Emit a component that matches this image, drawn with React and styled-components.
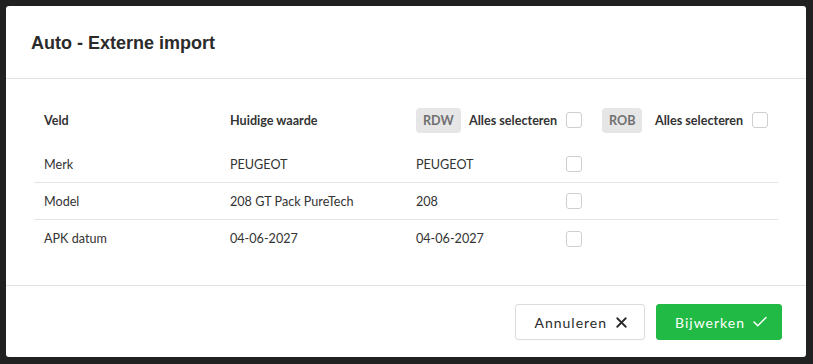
import { createGlobalStyle } from "styled-components";
import styled from "styled-components";
import { Check, X } from "lucide-react";

const GlobalStyle = createGlobalStyle`
  html, body {
    margin: 0;
    padding: 0;
    background: #212121;
    height: 100%;
  }
  * { box-sizing: border-box; }
`;

const Backdrop = styled.div`
  width: 813px;
  height: 364px;
  padding: 6px 7px 7px 6px;
  background: #212121;
`;

const Modal = styled.div`
  width: 800px;
  height: 351px;
  background: #fff;
  border-radius: 3px;
  display: flex;
  flex-direction: column;
  font-family: Lato, "Noto Sans", sans-serif;
  color: #333;
`;

const Header = styled.div`
  height: 73px;
  flex-shrink: 0;
  display: flex;
  align-items: center;
  padding: 2px 25px 0;
  border-bottom: 1px solid #e2e2e2;
`;

const Title = styled.h2`
  margin: 0;
  font-family: "Liberation Sans", Arial, sans-serif;
  font-size: 18px;
  font-weight: 700;
  color: #2b2b2b;
`;

const Body = styled.div`
  padding: 28px 28px 28px 28px;
  flex: 1;
`;

const Table = styled.div`
  display: grid;
  grid-template-columns: repeat(4, 186px);
  width: 744px;
`;

const Row = styled.div`
  display: contents;
`;

const Cell = styled.div`
  height: ${(p) => (p.$head ? "39px" : "37px")};
  padding: ${(p) => (p.$head ? "0 10px 13px" : "0 10px")};
  display: flex;
  align-items: center;
  justify-content: space-between;
  font-size: 12.6px;
  font-weight: ${(p) => (p.$head ? 700 : 400)};
  color: #333;
  border-bottom: ${(p) => (p.$line ? "1px solid #e4e4e4" : "none")};
`;

const Group = styled.div`
  display: flex;
  align-items: center;
`;

const BadgeSlot = styled.div`
  width: 53px;
`;

const Badge = styled.span`
  display: inline-flex;
  align-items: center;
  height: 25px;
  padding: 0 7px;
  background: #e6e6e6;
  border-radius: 4px;
  color: #707070;
  font-size: 12.6px;
  font-weight: 700;
`;

const Box = styled.span`
  width: 16px;
  height: 16px;
  border: 1px solid #cfcfcf;
  border-radius: 3px;
  background: #fff;
  flex-shrink: 0;
`;

const Footer = styled.div`
  height: 72px;
  border-top: 1px solid #e2e2e2;
  display: flex;
  justify-content: flex-end;
  align-items: flex-start;
  gap: 11px;
  padding: 18px 24px 0;
`;

const Button = styled.button`
  height: 36px;
  display: inline-flex;
  align-items: center;
  gap: 6px;
  padding: 0 ${(p) => (p.$primary ? "12px" : "14px")} 0 18px;
  border-radius: 3px;
  border: 1px solid ${(p) => (p.$primary ? "#21ba45" : "#dcdcdc")};
  background: ${(p) => (p.$primary ? "#21ba45" : "#fff")};
  color: ${(p) => (p.$primary ? "#fff" : "#2b2b2b")};
  font-family: Lato, "Noto Sans", sans-serif;
  font-size: 14px;
  letter-spacing: 1px;
  cursor: pointer;
`;

const rows = [
  { veld: "Merk", huidig: "PEUGEOT", rdw: "PEUGEOT" },
  { veld: "Model", huidig: "208 GT Pack PureTech", rdw: "208" },
  { veld: "APK datum", huidig: "04-06-2027", rdw: "04-06-2027" },
];

export default function App() {
  return (
    <>
      <GlobalStyle />
      <Backdrop>
        <Modal>
          <Header>
            <Title>Auto - Externe import</Title>
          </Header>
          <Body>
            <Table>
              <Row>
                <Cell $head>Veld</Cell>
                <Cell $head>Huidige waarde</Cell>
                <Cell $head>
                  <Group>
                    <BadgeSlot>
                      <Badge>RDW</Badge>
                    </BadgeSlot>
                    Alles selecteren
                  </Group>
                  <Box />
                </Cell>
                <Cell $head>
                  <Group>
                    <BadgeSlot>
                      <Badge>ROB</Badge>
                    </BadgeSlot>
                    Alles selecteren
                  </Group>
                  <Box />
                </Cell>
              </Row>
              {rows.map((r, i) => {
                const line = i < rows.length - 1;
                return (
                  <Row key={r.veld}>
                    <Cell $line={line}>{r.veld}</Cell>
                    <Cell $line={line}>{r.huidig}</Cell>
                    <Cell $line={line}>
                      {r.rdw}
                      <Box />
                    </Cell>
                    <Cell $line={line} />
                  </Row>
                );
              })}
            </Table>
          </Body>
          <Footer>
            <Button>
              Annuleren
              <X size={17} strokeWidth={2.6} />
            </Button>
            <Button $primary>
              Bijwerken
              <Check size={18} strokeWidth={2} />
            </Button>
          </Footer>
        </Modal>
      </Backdrop>
    </>
  );
}
